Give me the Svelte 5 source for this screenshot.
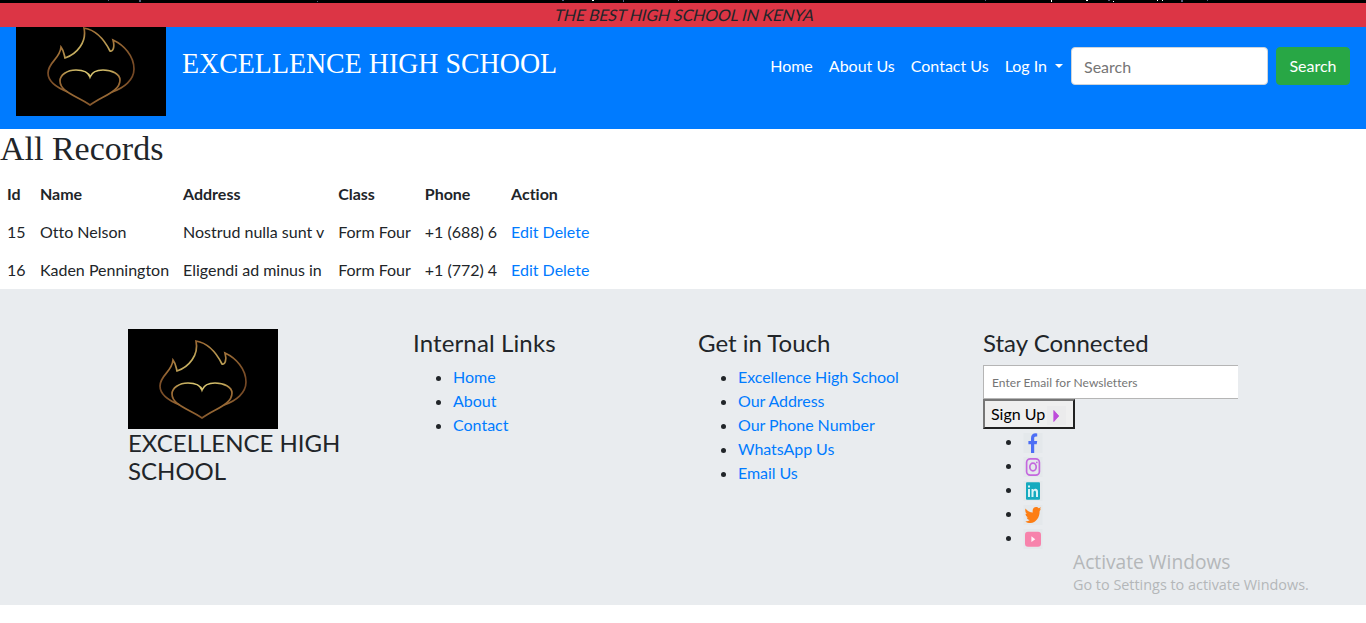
<script>
  const navLinks = ['Home', 'About Us', 'Contact Us'];
  const records = [
    { id: 15, name: 'Otto Nelson', address: 'Nostrud nulla sunt v', form: 'Form Four', phone: '+1 (688) 6' },
    { id: 16, name: 'Kaden Pennington', address: 'Eligendi ad minus in', form: 'Form Four', phone: '+1 (772) 4' }
  ];
  const internal = ['Home', 'About', 'Contact'];
  const contact = ['Excellence High School', 'Our Address', 'Our Phone Number', 'WhatsApp Us', 'Email Us'];
  const socials = ['facebook', 'instagram', 'linkedin', 'twitter', 'youtube'];
</script>

{#snippet logo(id)}
  <svg class="logo" width="150" height="100" viewBox="0 0 150 100" role="img" aria-label="Flame and heart">
    <defs>
      <radialGradient id={id} gradientUnits="userSpaceOnUse" cx="74" cy="48" r="46">
        <stop offset="0" stop-color="#ecdc80" />
        <stop offset=".5" stop-color="#c0a65a" />
        <stop offset=".72" stop-color="#a07038" />
        <stop offset="1" stop-color="#6e4222" />
      </radialGradient>
    </defs>
    <rect width="150" height="100" fill="#000" />
    <g fill="none" stroke="url(#{id})" stroke-width="1.7" stroke-linejoin="miter">
      <path d="M52 76C39 71 32 65 32 57C32 46 44 43 45 31C48 35 48 38 49 42C61 38 71 26 68 12C80 14 89 25 94 35C97 36 99 31 97 24C108 29 118 40 118 53C118 64 108 72 96 76" />
      <path d="M74 61C72 55 66 54 60 54C51 54 44 59 44 65C44 76 61 80 74 89C86 80 104 76 104 64C104 58 96 54 87 54C80 54 76 56 74 61Z" />
    </g>
  </svg>
{/snippet}

<div class="strip">
  <svg width="1366" height="3" viewBox="0 0 1366 3" aria-hidden="true">
    <g fill="#5a5f80">
      <rect x="108" y="0" width="1" height="1" /><rect x="139" y="0" width="2" height="2" /><rect x="317" y="1" width="1" height="1" />
      <rect x="562" y="0" width="2" height="1" /><rect x="623" y="0" width="1" height="2" /><rect x="678" y="0" width="1" height="1" />
      <rect x="985" y="0" width="1" height="1" /><rect x="1108" y="0" width="2" height="1" /><rect x="1181" y="0" width="2" height="2" /><rect x="1207" y="0" width="1" height="1" />
    </g>
    <g fill="#fff">
      <rect x="592" y="0" width="2" height="1" /><rect x="1051" y="0" width="1" height="2" /><rect x="1086" y="0" width="2" height="1" />
      <rect x="1113" y="1" width="1" height="1" /><rect x="1157" y="0" width="1" height="1" /><rect x="1162" y="0" width="1" height="1" />
    </g>
  </svg>
</div>
<div class="motto"><em>THE BEST HIGH SCHOOL IN KENYA</em></div>

<nav>
  <div class="crop">{@render logo('gold-top')}</div>
  <a class="brand" href="#home">EXCELLENCE HIGH SCHOOL</a>
  <div class="menu">
    {#each navLinks as link}<a href="#nav">{link}</a>{/each}
    <a class="drop" href="#login">Log In</a>
    <input type="search" placeholder="Search" aria-label="Search" />
    <button>Search</button>
  </div>
</nav>

<main>
  <h2>All Records</h2>
  <table>
    <thead>
      <tr><th>Id</th><th>Name</th><th>Address</th><th>Class</th><th>Phone</th><th>Action</th></tr>
    </thead>
    <tbody>
      {#each records as r}
        <tr>
          <td>{r.id}</td><td>{r.name}</td><td>{r.address}</td><td>{r.form}</td><td>{r.phone}</td>
          <td><a href="#edit">Edit</a> <a href="#delete">Delete</a></td>
        </tr>
      {/each}
    </tbody>
  </table>
</main>

<footer>
  <div class="cols">
    <section>
      {@render logo('gold-foot')}
      <h4>EXCELLENCE HIGH SCHOOL</h4>
    </section>
    <section>
      <h4 class="wide">Internal Links</h4>
      <ul>{#each internal as l}<li><a href="#link">{l}</a></li>{/each}</ul>
    </section>
    <section>
      <h4>Get in Touch</h4>
      <ul class="tight">{#each contact as l}<li><a href="#contact">{l}</a></li>{/each}</ul>
    </section>
    <section>
      <h4>Stay Connected</h4>
      <input class="email" type="email" placeholder="Enter Email for Newsletters" />
      <button class="signup">Sign Up
        <svg width="19" height="19" viewBox="0 0 19 19" aria-hidden="true"><rect width="19" height="19" fill="#ebebec" /><path d="M6.8 4.5L11.8 10L6.8 15.5Z" fill="#be4bdb" stroke="#be4bdb" stroke-width=".8" stroke-linejoin="round" /></svg>
      </button>
      <ul class="social">
        {#each socials as s}
          <li>
            <svg width="20" height="20" viewBox="0 0 20 20" role="img" aria-label={s}>
              <rect x=".5" width="19" height="20" fill="#e4e8eb" />
              {#if s === 'facebook'}
                <path d="M8 20V11.3H5.4V8H8V5.3C8 2 9.9.3 12.7.3L14.2.5V3.4H13C11.6 3.4 11.2 4.2 11.2 5.2V8H14.2L13.7 11.3H11.2V20Z" fill="#4c6ef5" />
              {:else if s === 'instagram'}
                <g fill="none" stroke="#c468de" stroke-width="1.7"><rect x="3.6" y="1.9" width="12.8" height="16.2" rx="3.6" /><ellipse cx="10" cy="10" rx="3.2" ry="3.9" /></g>
                <circle cx="13.8" cy="5.4" r=".9" fill="#c468de" />
              {:else if s === 'linkedin'}
                <rect x="3" y="1.3" width="14" height="17.4" rx="1" fill="#15aabf" />
                <path d="M5 8H7V16H5ZM5 4.5H7V6.6H5ZM8.5 8H10.4V9.1C11.7 7.2 15 7.3 15 10.8V16H13V11.4C13 9 10.5 9.1 10.5 11.4V16H8.5Z" fill="#d9f3f6" />
              {:else if s === 'twitter'}
                <path d="M2.5 3.5C4.5 6 7 7.4 9.8 7.5C9 4.3 10.8 2 13 2C14.2 2 15 2.5 15.7 3.2L18 2.2L16.8 4.5L18 4.2L16.6 6.1C16.8 12 13.2 18 7.5 18C5.5 18 3.8 17.4 2.3 16.4C4.3 16.5 5.7 15.9 6.8 15C5.2 14.8 4.2 13.8 3.7 12.4H5C3.6 11.8 2.6 10.6 2.5 8.8L3.9 9.1C2.5 7.7 1.9 5.7 2.5 3.5Z" fill="#fd7e14" />
              {:else}
                <rect x="2" y="2.7" width="16" height="15" rx="3" fill="#f783ac" />
                <path d="M8.4 7.3L12.3 10.2L8.4 13.1Z" fill="#fff0f6" />
              {/if}
            </svg>
          </li>
        {/each}
      </ul>
    </section>
  </div>
</footer>
<div class="watermark"><div class="big">Activate Windows</div><div class="small">Go to Settings to activate Windows.</div></div>

<style>
  :global(body) { margin: 0; background: #fff; color: #212529; font: 400 16px/24px Lato, sans-serif; font-variant-ligatures: no-common-ligatures; overflow: hidden; }
  :global(*) { box-sizing: border-box; }
  a { color: #007bff; text-decoration: none; }
  svg { display: block; }
  .strip { height: 3px; background: #000; overflow: hidden; }
  .motto { height: 24px; background: #dc3545; text-align: center; padding-left: 4px; }
  .motto em { display: inline-block; font-style: normal; letter-spacing: -.12px; transform: skewX(-14deg); }
  nav { height: 102px; background: #007bff; display: flex; align-items: flex-start; padding: 0 16px; }
  .crop { width: 150px; height: 89px; overflow: hidden; display: flex; align-items: flex-end; flex: none; }
  .crop .logo { flex: none; }
  .brand { font: 30px/40px "Liberation Serif", serif; color: #fff; margin: 16px 0 0 16px; white-space: nowrap; width: 375px; transform: scaleX(.93); transform-origin: left; }
  .menu { display: flex; margin-left: auto; padding-top: 20px; }
  .menu a { color: #fff; padding: 7px 8px; white-space: nowrap; }
  .menu .drop::after { content: ""; display: inline-block; margin-left: 8px; vertical-align: 4px; border: 4.8px solid transparent; border-top-color: #fff; border-bottom: 0; }
  .menu input { width: 197px; height: 38px; border: 1px solid #ced4da; border-radius: 4px; padding: 6px 12px; font: 16px Lato, sans-serif; margin-right: 8px; outline: 0; }
  .menu button { width: 74px; height: 38px; border: 1px solid #28a745; background: #28a745; color: #fff; border-radius: 4px; font: 16px/24px Lato, sans-serif; padding: 6px 0; }
  input::placeholder { color: #757575; opacity: 1; }
  h2 { margin: 0 0 8px; font: 34px/38px "Liberation Serif", serif; height: 38px; padding-top: 1px; }
  table { border-collapse: collapse; }
  th, td { padding: 7px; height: 38px; text-align: left; white-space: nowrap; letter-spacing: -.01px; }
  th:first-child { width: 33px; }
  footer { height: 316px; background: #e9ecef; padding-top: 40px; }
  .cols { width: 1140px; margin: 0 auto; display: grid; grid-template-columns: repeat(4, 285px); }
  section { padding: 0 15px; }
  h4 { margin: 0 0 8px; font: 400 24px/28px Lato, sans-serif; }
  .wide { letter-spacing: .13px; }
  ul { margin: 0; padding-left: 40px; }
  .tight { letter-spacing: -.06px; }
  li { height: 24px; }
  .email { display: block; width: 255px; height: 34px; border: 1px solid #b5b5b5; border-right: 0; padding: 1px 8px 0; font: 12px Lato, sans-serif; letter-spacing: .06px; outline: 0; }
  .signup { display: flex; align-items: center; gap: 2px; width: 92px; height: 30px; border: 2px solid; border-color: #767676 #212121 #212121 #767676; background: #efefef; padding: 0 6px; font: 16px/24px Lato, sans-serif; color: #000; white-space: nowrap; }
  .signup svg { flex: none; margin-top: 3px; }
  .social svg { display: inline-block; vertical-align: middle; }
  .watermark { position: absolute; left: 1073px; top: 550px; color: #b4b7b9; font-family: "Open Sans", sans-serif; white-space: nowrap; }
  .big { font-size: 19.2px; line-height: 24px; height: 25px; }
  .small { font-size: 14.4px; line-height: 20px; }
</style>
